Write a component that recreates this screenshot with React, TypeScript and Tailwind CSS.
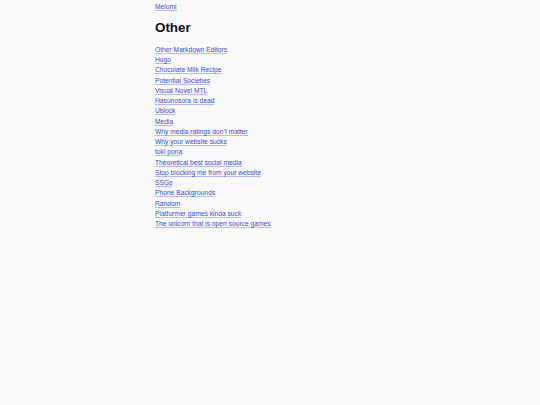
import React from "react";

const links = [
  "Other Markdown Editors",
  "Hugo",
  "Chocolate Milk Recipe",
  "Potential Societies",
  "Visual Novel MTL",
  "Hasunosora is dead",
  "Ublock",
  "Media",
  "Why media ratings don\u2019t matter",
  "Why your website sucks",
  "toki pona",
  "Theoretical best social media",
  "Stop blocking me from your website",
  "SSGs",
  "Phone Backgrounds",
  "Random",
  "Platformer games kinda suck",
  "The unicorn that is open source games",
];

function L({ children }: { children: React.ReactNode }) {
  return (
    <a href="#" className="text-[#3a4ccc] no-underline border-b border-[#b3bcec] leading-[8px]">
      {children}
    </a>
  );
}

export default function App() {
  return (
    <div className="min-h-[405px] w-full bg-[#f9f9f9] font-['Liberation_Sans',Arial,sans-serif]">
      <div className="mx-auto w-[230px] pt-[2px] text-[6.7px]">
        <div className="leading-[10px]">
          <L>Melomi</L>
        </div>
        <h2 className="mt-[8px] text-[13.4px] font-bold leading-[16px] text-[#111]">Other</h2>
        <ul className="mt-[9px]">
          {links.map((t) => (
            <li key={t} className="leading-[10.24px]">
              <L>{t}</L>
            </li>
          ))}
        </ul>
      </div>
    </div>
  );
}
